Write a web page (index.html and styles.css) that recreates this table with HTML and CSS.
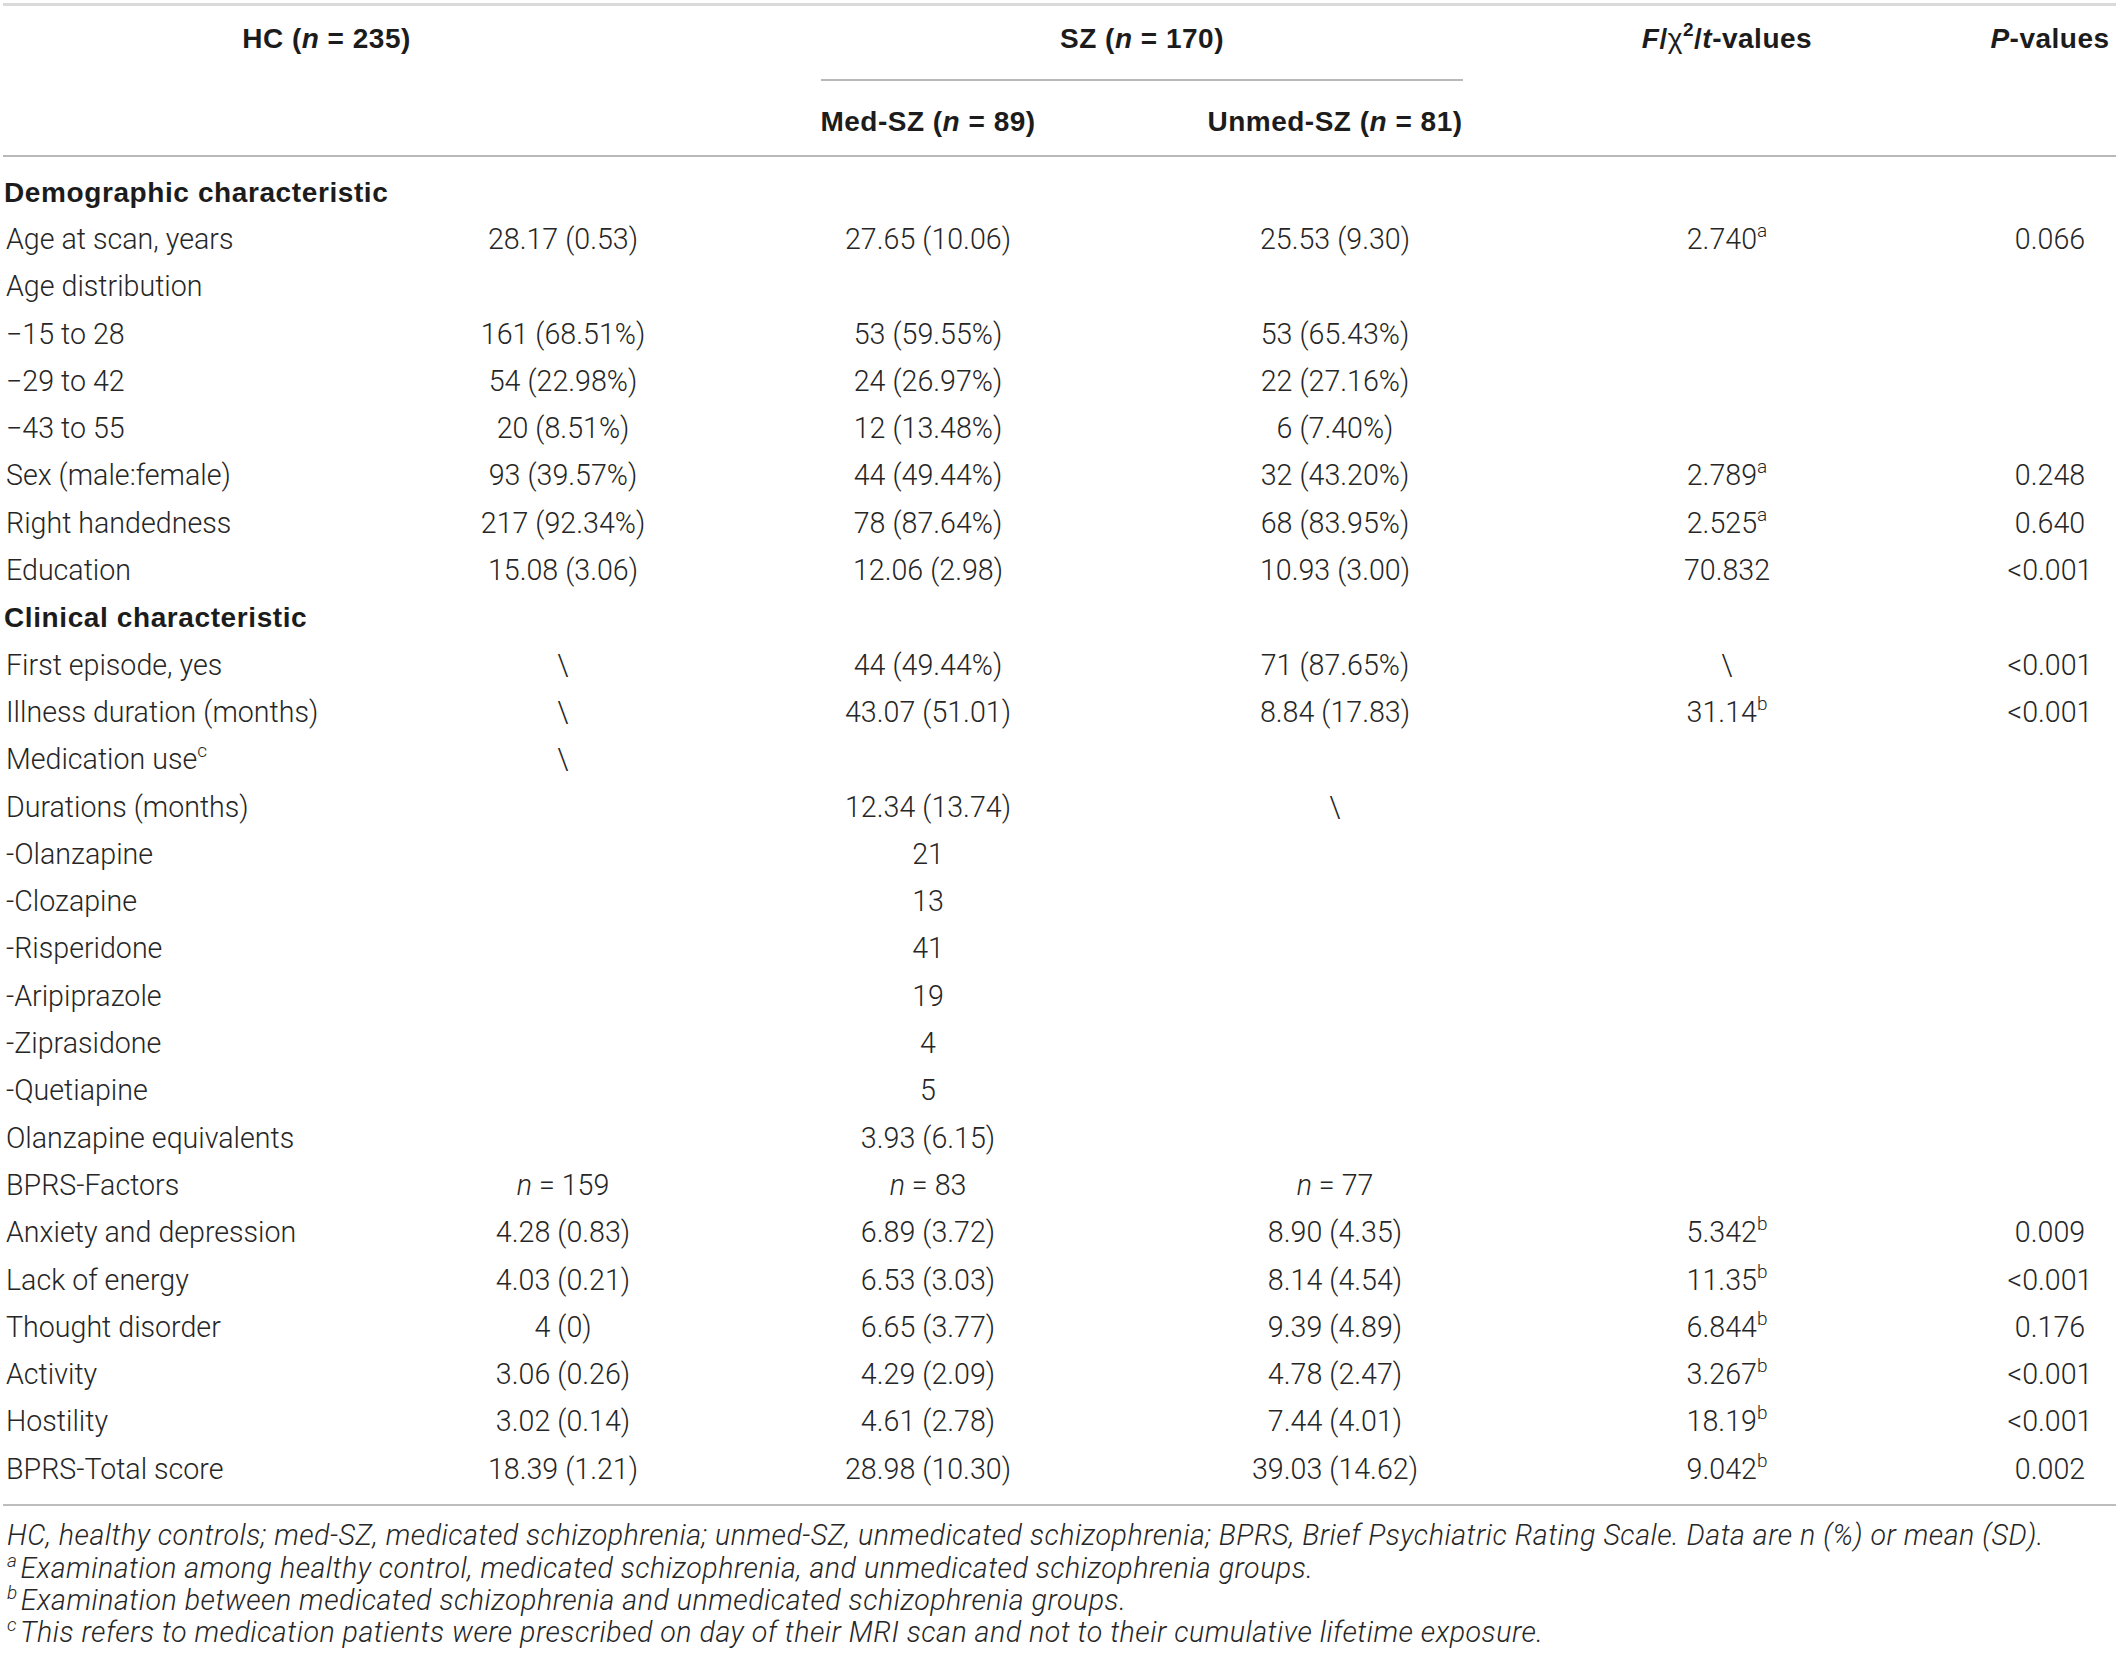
FILE: index.html
```html
<!DOCTYPE html>
<html lang="en">
<head>
<meta charset="utf-8">
<title>Table 1</title>
<link rel="stylesheet" href="styles.css">
</head>
<body>
<div class="page">
  <div class="tbl">
    <div class="thead">
      <div class="th th-hc">HC (<i>n</i> = 235)</div>
      <div class="th th-sz">SZ (<i>n</i> = 170)</div>
      <div class="th th-f"><i>F</i>/<span class="chi">χ</span><span class="sup-h">2</span>/<i>t</i>-values</div>
      <div class="th th-p"><i>P</i>-values</div>
      <div class="th th-med">Med-SZ (<i>n</i> = 89)</div>
      <div class="th th-unmed">Unmed-SZ (<i>n</i> = 81)</div>
    </div>
    <div class="tbody">
      <div class="row section"><span class="lbl">Demographic characteristic</span></div>
      <div class="row"><span class="lbl">Age at scan, years</span><span>28.17 (0.53)</span><span>27.65 (10.06)</span><span>25.53 (9.30)</span><span>2.740<span class="sup">a</span></span><span>0.066</span></div>
      <div class="row"><span class="lbl">Age distribution</span></div>
      <div class="row"><span class="lbl">−15 to 28</span><span>161 (68.51%)</span><span>53 (59.55%)</span><span>53 (65.43%)</span></div>
      <div class="row"><span class="lbl">−29 to 42</span><span>54 (22.98%)</span><span>24 (26.97%)</span><span>22 (27.16%)</span></div>
      <div class="row"><span class="lbl">−43 to 55</span><span>20 (8.51%)</span><span>12 (13.48%)</span><span>6 (7.40%)</span></div>
      <div class="row"><span class="lbl">Sex (male:female)</span><span>93 (39.57%)</span><span>44 (49.44%)</span><span>32 (43.20%)</span><span>2.789<span class="sup">a</span></span><span>0.248</span></div>
      <div class="row"><span class="lbl">Right handedness</span><span>217 (92.34%)</span><span>78 (87.64%)</span><span>68 (83.95%)</span><span>2.525<span class="sup">a</span></span><span>0.640</span></div>
      <div class="row"><span class="lbl">Education</span><span>15.08 (3.06)</span><span>12.06 (2.98)</span><span>10.93 (3.00)</span><span>70.832</span><span>&lt;0.001</span></div>
      <div class="row section"><span class="lbl">Clinical characteristic</span></div>
      <div class="row"><span class="lbl">First episode, yes</span><span>\</span><span>44 (49.44%)</span><span>71 (87.65%)</span><span>\</span><span>&lt;0.001</span></div>
      <div class="row"><span class="lbl">Illness duration (months)</span><span>\</span><span>43.07 (51.01)</span><span>8.84 (17.83)</span><span>31.14<span class="sup">b</span></span><span>&lt;0.001</span></div>
      <div class="row"><span class="lbl">Medication use<span class="sup">c</span></span><span>\</span></div>
      <div class="row"><span class="lbl">Durations (months)</span><span></span><span>12.34 (13.74)</span><span>\</span></div>
      <div class="row"><span class="lbl">-Olanzapine</span><span></span><span>21</span></div>
      <div class="row"><span class="lbl">-Clozapine</span><span></span><span>13</span></div>
      <div class="row"><span class="lbl">-Risperidone</span><span></span><span>41</span></div>
      <div class="row"><span class="lbl">-Aripiprazole</span><span></span><span>19</span></div>
      <div class="row"><span class="lbl">-Ziprasidone</span><span></span><span>4</span></div>
      <div class="row"><span class="lbl">-Quetiapine</span><span></span><span>5</span></div>
      <div class="row"><span class="lbl">Olanzapine equivalents</span><span></span><span>3.93 (6.15)</span></div>
      <div class="row"><span class="lbl">BPRS-Factors</span><span><i>n</i> = 159</span><span><i>n</i> = 83</span><span><i>n</i> = 77</span></div>
      <div class="row"><span class="lbl">Anxiety and depression</span><span>4.28 (0.83)</span><span>6.89 (3.72)</span><span>8.90 (4.35)</span><span>5.342<span class="sup">b</span></span><span>0.009</span></div>
      <div class="row"><span class="lbl">Lack of energy</span><span>4.03 (0.21)</span><span>6.53 (3.03)</span><span>8.14 (4.54)</span><span>11.35<span class="sup">b</span></span><span>&lt;0.001</span></div>
      <div class="row"><span class="lbl">Thought disorder</span><span>4 (0)</span><span>6.65 (3.77)</span><span>9.39 (4.89)</span><span>6.844<span class="sup">b</span></span><span>0.176</span></div>
      <div class="row"><span class="lbl">Activity</span><span>3.06 (0.26)</span><span>4.29 (2.09)</span><span>4.78 (2.47)</span><span>3.267<span class="sup">b</span></span><span>&lt;0.001</span></div>
      <div class="row"><span class="lbl">Hostility</span><span>3.02 (0.14)</span><span>4.61 (2.78)</span><span>7.44 (4.01)</span><span>18.19<span class="sup">b</span></span><span>&lt;0.001</span></div>
      <div class="row"><span class="lbl">BPRS-Total score</span><span>18.39 (1.21)</span><span>28.98 (10.30)</span><span>39.03 (14.62)</span><span>9.042<span class="sup">b</span></span><span>0.002</span></div>
    </div>
    <div class="notes">
      <p>HC, healthy controls; med-SZ, medicated schizophrenia; unmed-SZ, unmedicated schizophrenia; BPRS, Brief Psychiatric Rating Scale. Data are n (%) or mean (SD).</p>
      <p><span class="fn">a</span>Examination among healthy control, medicated schizophrenia, and unmedicated schizophrenia groups.</p>
      <p><span class="fn">b</span>Examination between medicated schizophrenia and unmedicated schizophrenia groups.</p>
      <p><span class="fn">c</span>This refers to medication patients were prescribed on day of their MRI scan and not to their cumulative lifetime exposure.</p>
    </div>
  </div>
</div>
</body>
</html>
```

FILE: styles.css
```css
html, body {
  margin: 0;
  padding: 0;
  background: #ffffff;
}

body {
  font-family: Roboto, "Liberation Sans", Arial, sans-serif;
  font-weight: 300;
  color: #262626;
  overflow: hidden;
}

.page {
  padding: 3px 0 0 3px;
  width: 2113px;
}

.tbl {
  border-top: 3px solid #dadada;
}

/* header */
.thead {
  display: grid;
  grid-template-columns: 473px 174px 556px 258px 526px 120px;
  grid-template-rows: 75px 74px;
  border-bottom: 2px solid #b9b9b9;
  font-family: "Liberation Sans", Arial, sans-serif;
  font-weight: bold;
  font-size: 28px;
  line-height: 32px;
  letter-spacing: 0.5px;
  color: #1c1c1c;
  text-align: center;
}

.th {
  box-sizing: border-box;
  white-space: nowrap;
}

.th-hc {
  grid-column: 1 / 3;
  grid-row: 1;
  padding-top: 17.3px;
}

.th-sz {
  grid-column: 3 / 5;
  grid-row: 1;
  padding-top: 17.3px;
  margin: 0 1px 0 171px;
  border-bottom: 2px solid #b9b9b9;
}

.th-f {
  grid-column: 5;
  grid-row: 1 / 3;
  padding-top: 17.3px;
}

.th-p {
  grid-column: 6;
  grid-row: 1 / 3;
  padding-top: 17.3px;
}

.th-med {
  grid-column: 3;
  grid-row: 2;
  padding-top: 25.3px;
}

.th-unmed {
  grid-column: 4;
  grid-row: 2;
  padding-top: 25.3px;
}

.chi {
  font-weight: normal;
}

.sup-h {
  font-size: 19px;
  line-height: 0;
  vertical-align: 12px;
}

/* body */
.tbody {
  padding: 11.7px 0 10.9px 0;
}

.row {
  display: grid;
  grid-template-columns: 473px 174px 556px 258px 526px 120px;
  height: 47.3px;
  font-size: 28.6px;
  line-height: 47.3px;
  text-align: center;
  white-space: nowrap;
}

.row .lbl {
  text-align: left;
  padding-left: 3px;
}

.row.section .lbl {
  font-family: "Liberation Sans", Arial, sans-serif;
  font-weight: bold;
  font-size: 28px;
  letter-spacing: 0.6px;
  color: #1c1c1c;
  padding-left: 1px;
}

.sup {
  font-size: 19px;
  line-height: 0;
  vertical-align: 12px;
}

/* notes */
.notes {
  border-top: 2px solid #bdbdbd;
  padding-top: 13.5px;
  font-style: italic;
  font-size: 28.6px;
  line-height: 32.3px;
  letter-spacing: 0.5px;
  color: #262626;
}

.notes p {
  margin: 0;
  padding-left: 4px;
  white-space: nowrap;
}

.fn {
  font-size: 19px;
  line-height: 0;
  vertical-align: 11px;
  padding-right: 3px;
}
```
